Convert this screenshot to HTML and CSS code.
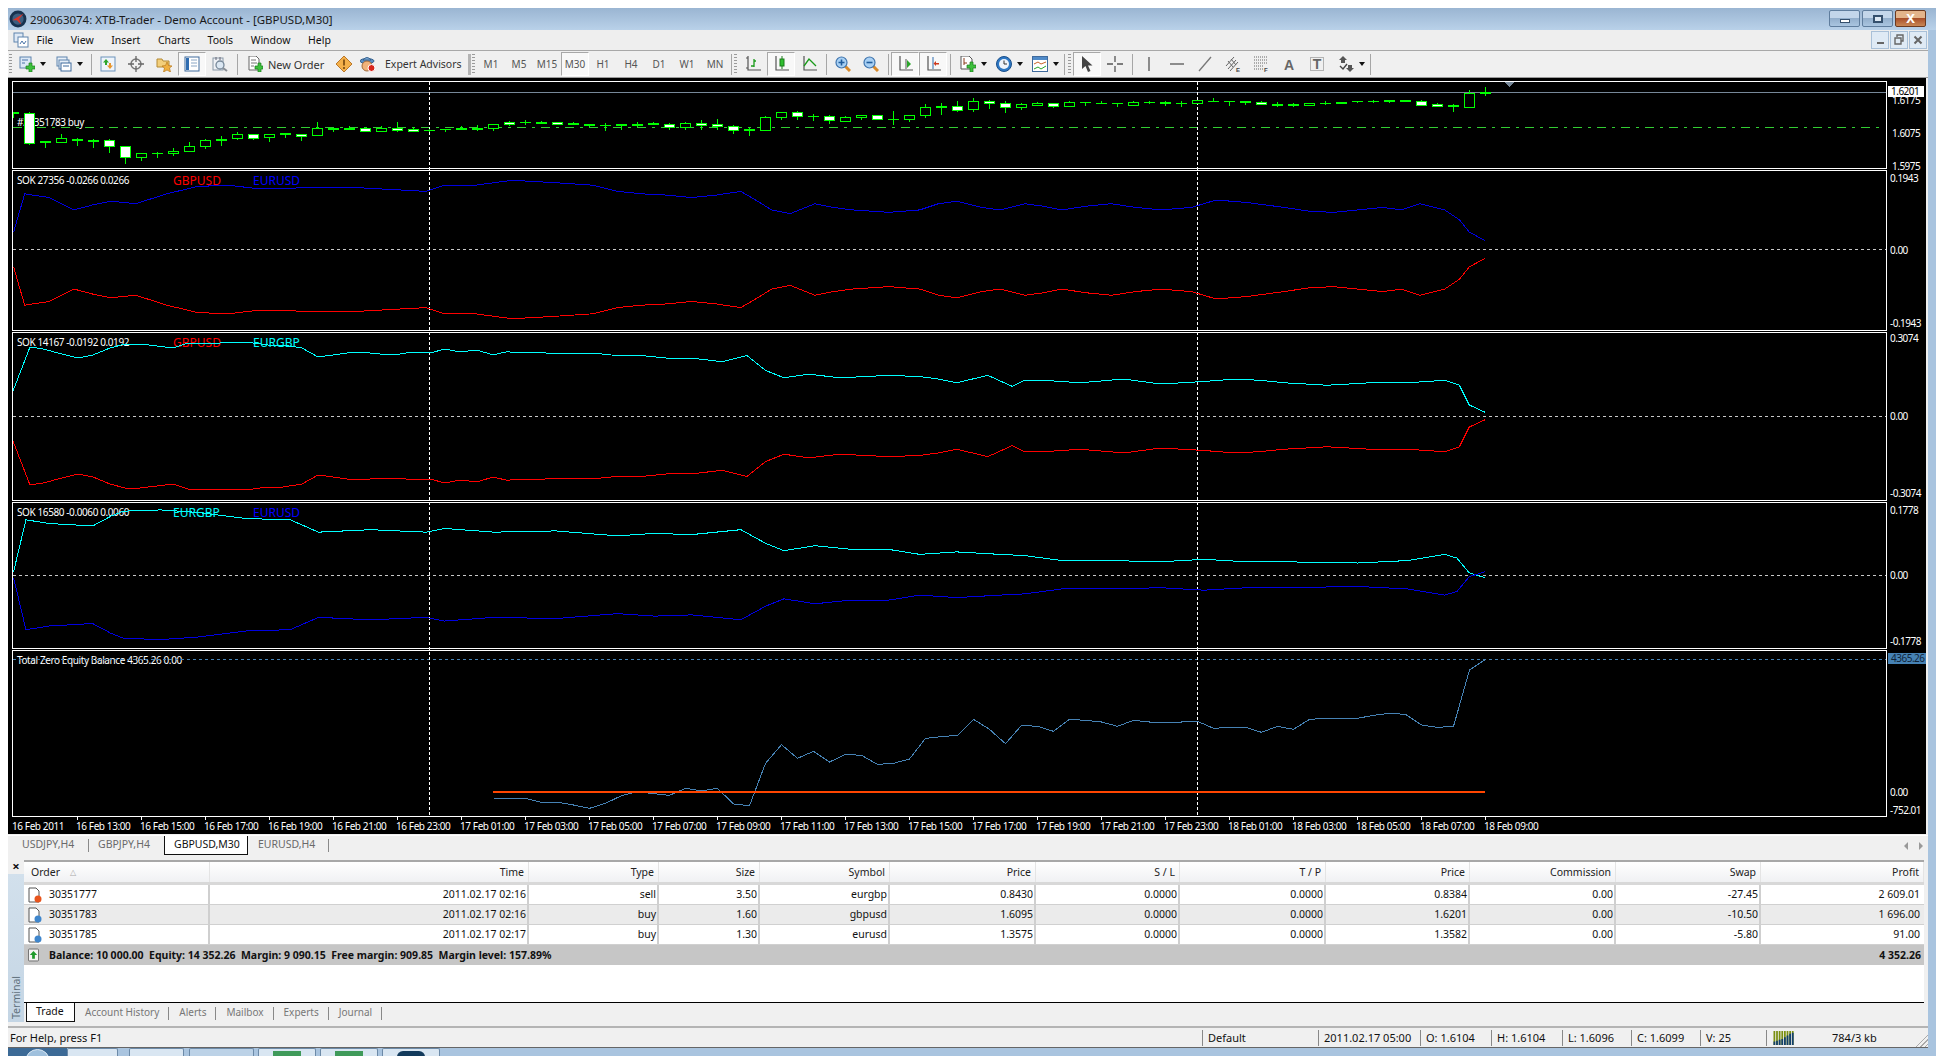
FILE: index.html
```html
<!DOCTYPE html>
<html lang="en">
<head>
    <meta charset="UTF-8">
    <title>290063074: XTB-Trader - Demo Account - [GBPUSD,M30]</title>
    <link rel="stylesheet" href="styles.css">
</head>
<body>
<div class="window">
    <header class="titlebar">
        <svg class="logo" viewBox="0 0 16 16"><circle cx="8" cy="8" r="7.5" fill="#17324f"/><circle cx="8" cy="8" r="5" fill="#3d5f80"/><path d="M3 9 L13 3 L9 8 L11 13 L7 9 Z" fill="#d8352a"/></svg>
        <span class="title-text">290063074: XTB-Trader - Demo Account - [GBPUSD,M30]</span>
        <div class="win-buttons">
            <button class="win-btn"><i class="glyph-min"></i></button>
            <button class="win-btn"><i class="glyph-max"></i></button>
            <button class="win-btn close"><b>X</b></button>
        </div>
    </header>

    <div class="client">
        <nav class="menubar">
            <svg class="ic doc-ic" viewBox="0 0 16 16"><rect x="1" y="1" width="9" height="9" fill="#dfe9f5" stroke="#5f84ad"/><rect x="5" y="5" width="10" height="10" fill="#fff" stroke="#5f84ad"/><path d="M7 12 L9 9 L11 12 L13 9" fill="none" stroke="#4a74a8"/></svg>
            <span class="menu-item">File</span>
            <span class="menu-item">View</span>
            <span class="menu-item">Insert</span>
            <span class="menu-item">Charts</span>
            <span class="menu-item">Tools</span>
            <span class="menu-item">Window</span>
            <span class="menu-item">Help</span>
            <div class="mdi-buttons">
                <button class="mdi-btn"><i class="mdi-min"></i></button>
                <button class="mdi-btn"><svg viewBox="0 0 12 12"><path d="M4 3V1H10V7H8M2 4H8V10H2Z" fill="none" stroke="#666" stroke-width="1.4"/></svg></button>
                <button class="mdi-btn"><svg viewBox="0 0 12 12"><path d="M2.5 2.5 L9.5 9.5 M9.5 2.5 L2.5 9.5" stroke="#666" stroke-width="2"/></svg></button>
            </div>
        </nav>

        <div class="toolbar">
            <i class="grip"></i>
            <button class="btn drop first">
                <svg class="ic" viewBox="0 0 16 16"><rect x="1" y="1" width="11" height="11" fill="#dbe8f6" stroke="#5f84ad"/><path d="M3 4H9M3 7H6" stroke="#4a74a8"/><path d="M7 10H10V7H13V10H16V13H13V16H10V13H7Z" fill="#3cc03c" stroke="#1b7d1b" stroke-width=".7"/></svg>
                <i class="caret"></i>
            </button>
            <button class="btn drop wide">
                <svg class="ic" viewBox="0 0 16 16"><rect x="1" y="1" width="10" height="9" fill="#e8f0f9" stroke="#5f84ad"/><rect x="3" y="4" width="10" height="9" fill="#e8f0f9" stroke="#5f84ad"/><rect x="5" y="7" width="10" height="8" fill="#fff" stroke="#3f6a9c"/><path d="M7 10H13" stroke="#3f6a9c"/></svg>
                <i class="caret"></i>
            </button>
            <i class="sep"></i>
            <button class="btn"><svg class="ic" viewBox="0 0 16 16"><rect x="1" y="1" width="14" height="14" fill="#eef4fb" stroke="#6d93bb"/><path d="M6 3L9 6.5H7V9H5V6.5H3Z" fill="#2da52d"/><path d="M10 13L7 9.5H9V7H11V9.5H13Z" fill="#e8962e"/></svg></button>
            <button class="btn"><svg class="ic" viewBox="0 0 16 16"><circle cx="8" cy="8" r="5" fill="none" stroke="#777" stroke-width="1.4"/><path d="M8 0V6M8 10V16M0 8H6M10 8H16" stroke="#666" stroke-width="1.3"/></svg></button>
            <button class="btn"><svg class="ic" viewBox="0 0 16 16"><path d="M1 3H6L7 5H13V11H1Z" fill="#f3cf7b" stroke="#b48a34"/><path d="M11 6L12.5 9.5L16 10L13.500 12L14.500 16L11 14L7.500 16L8.500 12L6 10L9.500 9.500Z" fill="#f0b040" stroke="#b97a1c" stroke-width=".7"/></svg></button>
            <button class="btn on"><svg class="ic" viewBox="0 0 16 16"><rect x="1" y="1" width="14" height="14" fill="#fff" stroke="#3f6a9c"/><rect x="2" y="2" width="3" height="12" fill="#2f6cb0"/><path d="M7 4H13M7 7H13M7 10H13" stroke="#8aa6c4"/></svg></button>
            <button class="btn"><svg class="ic" viewBox="0 0 16 16"><rect x="1" y="2" width="10" height="12" fill="#eef1f5" stroke="#8a99a8"/><path d="M4 1V4M8 1V4" stroke="#667"/><circle cx="8" cy="9" r="4" fill="#dbe7f2" stroke="#778899" stroke-width="1.3"/><path d="M11 12L15 15" stroke="#8a8f96" stroke-width="2"/></svg></button>
            <i class="sep"></i>
            <button class="btn labelled">
                <svg class="ic" viewBox="0 0 16 16"><path d="M2 0H9L12 3V14H2Z" fill="#fff" stroke="#666"/><path d="M4 4H9M4 7H10M4 10H7" stroke="#777"/><path d="M8 10H11V7H14V10H16V13H14V16H11V13H8Z" fill="#3cc03c" stroke="#1b7d1b" stroke-width=".7"/></svg>
                <span>New Order</span>
            </button>
            <button class="btn"><svg class="ic" viewBox="0 0 16 16"><path d="M8 0L16 8L8 16L0 8Z" fill="#f4b04a" stroke="#b9772a"/><path d="M8 3.500V9.500M8 11V13" stroke="#7a4a12" stroke-width="1.700"/></svg></button>
            <button class="btn labelled ea">
                <svg class="ic" viewBox="0 0 16 16"><ellipse cx="7" cy="5" rx="7" ry="2.500" fill="#5c8fc4" stroke="#34618f"/><path d="M3 4Q7 -1 11 4Z" fill="#7eabd8" stroke="#34618f"/><circle cx="7" cy="10" r="5" fill="#f0b27a" stroke="#a06a3a"/><circle cx="11.500" cy="12" r="3.500" fill="#d8261c" stroke="#fff"/></svg>
                <span>Expert Advisors</span>
            </button>
            <i class="sep thick"></i>
            <i class="grip"></i>
            <button class="btn tf">M1</button>
            <button class="btn tf">M5</button>
            <button class="btn tf">M15</button>
            <button class="btn tf on">M30</button>
            <button class="btn tf">H1</button>
            <button class="btn tf">H4</button>
            <button class="btn tf">D1</button>
            <button class="btn tf">W1</button>
            <button class="btn tf">MN</button>
            <i class="sep tight"></i>
            <i class="grip"></i>
            <button class="btn"><svg class="ic" viewBox="0 0 16 16"><path d="M3 0V14H16M1 2H3M1 12H3" fill="none" stroke="#555" stroke-width="1.200"/><path d="M9 3V11M9 10H6M9 5H11" stroke="#1a9a1a" stroke-width="1.300" fill="none"/></svg></button>
            <button class="btn on"><svg class="ic" viewBox="0 0 16 16"><path d="M3 0V14H16" fill="none" stroke="#555" stroke-width="1.200"/><path d="M9 0V13" stroke="#1a7a1a"/><rect x="7" y="3" width="4" height="7" fill="#2fbf2f" stroke="#1a7a1a"/></svg></button>
            <button class="btn"><svg class="ic" viewBox="0 0 16 16"><path d="M3 0V14H16" fill="none" stroke="#555" stroke-width="1.200"/><path d="M3 10L8 3L11 6L15 10" fill="none" stroke="#1a9a1a" stroke-width="1.300"/></svg></button>
            <i class="sep"></i>
            <button class="btn"><svg class="ic" viewBox="0 0 16 16"><path d="M10 10L15 15" stroke="#d98a2b" stroke-width="3"/><circle cx="6.500" cy="6.500" r="5.500" fill="#a8d0f4" stroke="#3f74ad" stroke-width="1.200"/><path d="M3.500 6.500H9.500M6.500 3.500V9.500" stroke="#1f5c9c" stroke-width="1.600"/></svg></button>
            <button class="btn"><svg class="ic" viewBox="0 0 16 16"><path d="M10 10L15 15" stroke="#d98a2b" stroke-width="3"/><circle cx="6.500" cy="6.500" r="5.500" fill="#a8d0f4" stroke="#3f74ad" stroke-width="1.200"/><path d="M3.500 6.500H9.500" stroke="#1f5c9c" stroke-width="1.600"/></svg></button>
            <i class="sep"></i>
            <button class="btn on"><svg class="ic" viewBox="0 0 16 16"><path d="M3 0V14H16" fill="none" stroke="#555" stroke-width="1.200"/><path d="M9 3V13" stroke="#555"/><path d="M10 4L14 8L10 12Z" fill="#2aa52a"/></svg></button>
            <button class="btn on"><svg class="ic" viewBox="0 0 16 16"><path d="M3 0V14H16" fill="none" stroke="#555" stroke-width="1.200"/><path d="M8 1V13" stroke="#2f6cb0"/><path d="M14 7H11V5L8.500 7.500L11 10V8.500H14Z" fill="#cf3a1e"/></svg></button>
            <i class="sep"></i>
            <button class="btn drop">
                <svg class="ic" viewBox="0 0 16 16"><path d="M1 0H9L12 3V13H1Z" fill="#fff" stroke="#555"/><path d="M4 2V9M4 7H7" stroke="#8a3a1a"/><path d="M7 9H10V6H13V9H16V12H13V16H10V12H7Z" fill="#3cc03c" stroke="#1b7d1b" stroke-width=".7"/></svg>
                <i class="caret"></i>
            </button>
            <button class="btn drop">
                <svg class="ic" viewBox="0 0 16 16"><circle cx="8" cy="8" r="7.500" fill="#2e78c4" stroke="#1a4f8a"/><circle cx="8" cy="8" r="5" fill="#eef4fb"/><path d="M8 4.500V8H11" fill="none" stroke="#333"/></svg>
                <i class="caret"></i>
            </button>
            <button class="btn drop">
                <svg class="ic" viewBox="0 0 16 16"><rect x="0.500" y="0.500" width="15" height="15" fill="#fff" stroke="#3f6a9c"/><rect x="1" y="1" width="14" height="3" fill="#4f8ac8"/><path d="M2 8L6 6L9 8L14 6" fill="none" stroke="#c8642a"/><path d="M2 13L6 11L9 13L14 10" fill="none" stroke="#2aa52a"/></svg>
                <i class="caret"></i>
            </button>
            <i class="sep"></i>
            <i class="grip"></i>
            <button class="btn on"><svg class="ic" viewBox="0 0 16 16"><path d="M3 0V13L6.500 10L9 16L11.500 15L9 9.500H13.500Z" fill="#444"/></svg></button>
            <button class="btn"><svg class="ic" viewBox="0 0 16 16"><path d="M8 0V6M8 10V16M0 8H6M10 8H16" stroke="#555" stroke-width="1.300"/></svg></button>
            <i class="sep"></i>
            <button class="btn"><svg class="ic" viewBox="0 0 16 16"><path d="M8 1V15" stroke="#555" stroke-width="1.300"/></svg></button>
            <button class="btn"><svg class="ic" viewBox="0 0 16 16"><path d="M1 8H15" stroke="#555" stroke-width="1.300"/></svg></button>
            <button class="btn"><svg class="ic" viewBox="0 0 16 16"><path d="M2 15L14 1" stroke="#777" stroke-width="1.300"/></svg></button>
            <button class="btn"><svg class="ic" viewBox="0 0 16 16"><path d="M1 10L9 1M3 13L11 4M5 15L13 6M3 5L8 11M6 3L11 9" stroke="#666" fill="none"/><text x="11" y="16" class="ic-letter">E</text></svg></button>
            <button class="btn"><svg class="ic" viewBox="0 0 16 16"><path d="M1 1H14M1 4H14M1 7H14M1 10H10M1 13H10" stroke="#666" stroke-dasharray="1 1"/><text x="11" y="16" class="ic-letter">F</text></svg></button>
            <button class="btn"><svg class="ic" viewBox="0 0 16 16"><text x="8" y="14" class="ic-big">A</text></svg></button>
            <button class="btn"><svg class="ic" viewBox="0 0 16 16"><rect x="1.500" y="1.500" width="13" height="13" fill="none" stroke="#777" stroke-dasharray="1 1"/><text x="8" y="13" class="ic-big">T</text></svg></button>
            <button class="btn drop">
                <svg class="ic" viewBox="0 0 16 16"><path d="M5 0L9 4H7V7H3V4H1Z" fill="#555"/><path d="M12 16L8 12H10V9H14V12H16Z" fill="#555"/><path d="M2 10L5 13L9 8" fill="none" stroke="#444" stroke-width="1.400"/></svg>
                <i class="caret"></i>
            </button>
            <i class="sep"></i>
        </div>

        <main class="chart">
            <section class="pane pane-1">
                <div class="plot"><span class="order-label">#30351783 buy</span></div>
                <div class="axis">
                    <span class="tick" style="top:13px">1.6175</span>
                    <span class="tick" style="top:46px">1.6075</span>
                    <span class="tick" style="top:79px">1.5975</span>
                    <span class="tick current" style="top:5px">1.6201</span>
                </div>
            </section>
            <section class="pane pane-2">
                <div class="plot">
                    <span class="ind-name">SOK 27356 -0.0266 0.0266</span>
                    <span class="sym first red">GBPUSD</span><span class="sym second blue">EURUSD</span>
                </div>
                <div class="axis">
                    <span class="tick" style="top:2px">0.1943</span>
                    <span class="tick" style="top:74px">0.00</span>
                    <span class="tick" style="top:147px">-0.1943</span>
                </div>
            </section>
            <section class="pane pane-3">
                <div class="plot">
                    <span class="ind-name">SOK 14167 -0.0192 0.0192</span>
                    <span class="sym first red">GBPUSD</span><span class="sym second cyan">EURGBP</span>
                </div>
                <div class="axis">
                    <span class="tick" style="top:0">0.3074</span>
                    <span class="tick" style="top:78px">0.00</span>
                    <span class="tick" style="top:155px">-0.3074</span>
                </div>
            </section>
            <section class="pane pane-4">
                <div class="plot">
                    <span class="ind-name">SOK 16580 -0.0060 0.0060</span>
                    <span class="sym first cyan">EURGBP</span><span class="sym second blue">EURUSD</span>
                </div>
                <div class="axis">
                    <span class="tick" style="top:2px">0.1778</span>
                    <span class="tick" style="top:67px">0.00</span>
                    <span class="tick" style="top:133px">-0.1778</span>
                </div>
            </section>
            <section class="pane pane-5">
                <div class="plot">
                    <span class="ind-name">Total Zero Equity Balance 4365.26 0.00</span>
                </div>
                <div class="axis">
                    <span class="tick balance" style="top:3px">4365.26</span>
                    <span class="tick" style="top:136px">0.00</span>
                    <span class="tick" style="top:154px">-752.01</span>
                </div>
            </section>
            <div class="time-axis">
                <span>16 Feb 2011</span><span>16 Feb 13:00</span><span>16 Feb 15:00</span><span>16 Feb 17:00</span><span>16 Feb 19:00</span><span>16 Feb 21:00</span><span>16 Feb 23:00</span>
                <span>17 Feb 01:00</span><span>17 Feb 03:00</span><span>17 Feb 05:00</span><span>17 Feb 07:00</span><span>17 Feb 09:00</span><span>17 Feb 11:00</span><span>17 Feb 13:00</span><span>17 Feb 15:00</span><span>17 Feb 17:00</span><span>17 Feb 19:00</span><span>17 Feb 21:00</span><span>17 Feb 23:00</span>
                <span>18 Feb 01:00</span><span>18 Feb 03:00</span><span>18 Feb 05:00</span><span>18 Feb 07:00</span><span>18 Feb 09:00</span>
            </div>
            <svg id="overlay" viewBox="8 78 1918 756"></svg>
        </main>

        <div class="chart-tabs">
            <span class="ctab">USDJPY,H4</span>
            <span class="ctab">GBPJPY,H4</span>
            <span class="ctab active">GBPUSD,M30</span>
            <span class="ctab">EURUSD,H4</span>
            <div class="tab-arrows"><i class="arrow-l"></i><i class="arrow-r"></i></div>
        </div>

        <section class="terminal">
            <aside class="term-side">
                <b class="term-close">×</b>
                <div class="term-strip"><span>Terminal</span></div>
            </aside>
            <div class="term-main">
                <div class="row head">
                    <div>Order<i class="sort">△</i></div><div>Time</div><div>Type</div><div>Size</div><div>Symbol</div><div>Price</div><div>S / L</div><div>T / P</div><div>Price</div><div>Commission</div><div>Swap</div><div>Profit</div>
                </div>
                <div class="row">
                    <div><svg class="doc" viewBox="0 0 14 16"><path d="M1 1H8L11 4V15H1Z" fill="#fff" stroke="#555"/><circle cx="10" cy="12" r="3.500" fill="#e8541c"/></svg>30351777</div><div>2011.02.17 02:16</div><div>sell</div><div>3.50</div><div>eurgbp</div><div>0.8430</div><div>0.0000</div><div>0.0000</div><div>0.8384</div><div>0.00</div><div>-27.45</div><div>2 609.01</div>
                </div>
                <div class="row alt">
                    <div><svg class="doc" viewBox="0 0 14 16"><path d="M1 1H8L11 4V15H1Z" fill="#fff" stroke="#555"/><circle cx="10" cy="12" r="3.500" fill="#3f86cc"/></svg>30351783</div><div>2011.02.17 02:16</div><div>buy</div><div>1.60</div><div>gbpusd</div><div>1.6095</div><div>0.0000</div><div>0.0000</div><div>1.6201</div><div>0.00</div><div>-10.50</div><div>1 696.00</div>
                </div>
                <div class="row">
                    <div><svg class="doc" viewBox="0 0 14 16"><path d="M1 1H8L11 4V15H1Z" fill="#fff" stroke="#555"/><circle cx="10" cy="12" r="3.500" fill="#3f86cc"/></svg>30351785</div><div>2011.02.17 02:17</div><div>buy</div><div>1.30</div><div>eurusd</div><div>1.3575</div><div>0.0000</div><div>0.0000</div><div>1.3582</div><div>0.00</div><div>-5.80</div><div>91.00</div>
                </div>
                <div class="summary">
                    <svg class="up" viewBox="0 0 12 14"><rect x=".5" y=".5" width="11" height="13" rx="1" fill="#f4f4f4" stroke="#666"/><path d="M6 2.500L10 7H7.500V11H4.500V7H2Z" fill="#1f9a2c"/></svg>
                    <span>Balance: 10 000.00&nbsp; Equity: 14 352.26&nbsp; Margin: 9 090.15&nbsp; Free margin: 909.85&nbsp; Margin level: 157.89%</span>
                    <span class="total">4 352.26</span>
                </div>
                <div class="blank"></div>
                <div class="term-tabs">
                    <span class="ttab active">Trade</span>
                    <span class="ttab">Account History</span>
                    <span class="ttab">Alerts</span>
                    <span class="ttab">Mailbox</span>
                    <span class="ttab">Experts</span>
                    <span class="ttab">Journal</span>
                </div>
            </div>
        </section>

        <footer class="statusbar">
            <span class="st help">For Help, press F1</span>
            <span class="st profile">Default</span>
            <span class="st date">2011.02.17 05:00</span>
            <span class="st ohlc">O: 1.6104</span>
            <span class="st ohlc">H: 1.6104</span>
            <span class="st ohlc">L: 1.6096</span>
            <span class="st ohlc">C: 1.6099</span>
            <span class="st ohlc">V: 25</span>
            <span class="st conn">
                <svg class="bars" viewBox="0 0 24 16"><path d="M1 0V16M4 0V16M7 0V16M10 0V16M13 0V16M16 0V16M19 0V16M22 0V16" stroke="#7a8f10" stroke-width="2"/><path d="M1 12V16M4 11V16M7 10V16M10 9V16M13 7V16M16 5V16M19 3V16M22 2V16" stroke="#123f6e" stroke-width="2"/></svg>
                <span class="kb">784/3 kb</span>
            </span>
            <i class="size-grip"></i>
        </footer>
    </div>

    <div class="taskbar">
        <span class="start"><i></i></span>
        <span class="task t1"></span>
        <span class="task t2"></span>
        <span class="task t3"></span>
        <span class="task t4"><i class="green"></i></span>
        <span class="task t4"><i class="green"></i></span>
        <span class="task t4"><i class="navy"></i></span>
    </div>
</div>
<script src="script.js"></script>
</body>
</html>
```

FILE: styles.css
```css
* {
    box-sizing: border-box;
}

html, body {
    margin: 0;
    height: 1056px;
    overflow: hidden;
    background: #fff;
    font-family: "Noto Sans", sans-serif;
    font-size: 10.5px;
    color: #111;
}

button {
    font: inherit;
    padding: 0;
    border: none;
    background: none;
    color: inherit;
}

.window {
    margin: 8px 0 0 8px;
    height: 1048px;
    background: #a9c4df;
}

/* title bar */
.titlebar {
    height: 22px;
    display: flex;
    align-items: center;
    padding: 0 10px 0 1px;
    background: linear-gradient(#9ab5d2, #b9d1e9);
}

.logo {
    width: 18px;
    height: 18px;
}

.title-text {
    margin-left: 3px;
    font-size: 11.5px;
    color: #1a1a1a;
}

.win-buttons {
    margin-left: auto;
    display: flex;
    gap: 2px;
    height: 17px;
    align-self: flex-start;
    margin-top: 2px;
}

.win-btn {
    width: 31px;
    border: 1px solid #5f7d9d;
    border-radius: 2px;
    background: linear-gradient(#c3d6ea 45%, #93afcc 50%, #aac5e0);
    display: flex;
    align-items: center;
    justify-content: center;
}

.glyph-min {
    width: 10px;
    height: 4px;
    margin-top: 4px;
    border: 1px solid #35506d;
    background: #fff;
}

.glyph-max {
    width: 10px;
    height: 8px;
    border: 2px solid #35506d;
    background: #dde8f3;
}

.win-btn.close {
    border-color: #6b3a20;
    background: linear-gradient(#e3b48b 45%, #a9502a 50%, #c98755);
    color: #fff;
    font-size: 13px;
    line-height: 1;
}

/* client area */
.client {
    width: 1920px;
    background: #f0f0f0;
}

.ic {
    display: block;
    width: 16px;
    height: 16px;
    flex: none;
}

.ic-letter {
    font: bold 6px "Liberation Sans", sans-serif;
    fill: #444;
}

.ic-big {
    font: bold 14px "Liberation Sans", sans-serif;
    fill: #666;
    text-anchor: middle;
}

.menubar {
    height: 21px;
    display: flex;
    align-items: center;
    padding-left: 5px;
    border-bottom: 1px solid #a8a8a8;
    background: #eee;
    font-size: 10.5px;
}

.doc-ic {
    margin-right: -1px;
}

.menu-item {
    padding: 0 9px 0 8.5px;
}

.mdi-buttons {
    margin-left: auto;
    margin-right: 1px;
    display: flex;
    gap: 1px;
}

.mdi-btn {
    width: 18px;
    height: 18px;
    display: flex;
    align-items: center;
    justify-content: center;
    border: 1px solid #a9c0d8;
    background: #dfeaf5;
}

.mdi-btn svg {
    width: 12px;
    height: 12px;
}

.mdi-min {
    width: 7px;
    height: 2px;
    margin-top: 6px;
    background: #666;
}

.toolbar {
    height: 27px;
    display: flex;
    align-items: center;
    background: #f0f0f0;
    border-bottom: 1px solid #9a9a9a;
}

.grip {
    width: 3px;
    height: 20px;
    margin: 0 2px 0 1px;
    flex: none;
    background: repeating-linear-gradient(#9a9a9a 0 1px, transparent 1px 3px);
}

.sep {
    width: 1px;
    height: 21px;
    margin: 0 2px 0 3px;
    flex: none;
    background: #a6a6a6;
}

.sep.tight {
    margin-left: 2px;
    margin-right: 1px;
}

.sep.thick {
    width: 3px;
    background: #b4b4b4;
    margin-right: 0;
}

.btn {
    width: 28px;
    height: 24px;
    flex: none;
    display: flex;
    align-items: center;
    justify-content: center;
    font-size: 11px;
    color: #333;
}

.btn.drop {
    width: 36px;
    justify-content: flex-start;
    padding-left: 7px;
}

.btn.drop.wide {
    width: 38px;
    padding-left: 6px;
}

.btn.drop.first {
    padding-left: 5px;
}

.caret {
    margin-left: 5px;
    border: 3px solid transparent;
    border-top: 4px solid #111;
    border-bottom: 0;
}

.btn.labelled {
    width: 90px;
    padding-left: 7px;
    justify-content: flex-start;
}

.btn.labelled span {
    margin-left: 5px;
    white-space: nowrap;
}

.btn.ea {
    width: 107px;
    padding-left: 2px;
}

.btn.ea span {
    margin-left: 9px;
    font-size: 10.5px;
}

.btn.tf {
    color: #555;
    font-size: 10px;
}

.btn.on {
    background: #f8f8f8;
    border: 1px solid;
    border-color: #a8a8a8 #fff #fff #a8a8a8;
}

/* chart */
.chart {
    position: relative;
    height: 756px;
    width: 1918px;
    padding: 3px 0 0 4px;
    background: #000;
    color: #fff;
}

.pane {
    display: flex;
    margin-bottom: 1px;
}

.pane-1 { height: 88px; }
.pane-2 { height: 161px; }
.pane-3 { height: 169px; }
.pane-4 { height: 147px; }
.pane-5 { height: 167px; margin-bottom: 0; }

.plot {
    position: relative;
    width: 1875px;
    flex: none;
    border: 1px solid #fff;
}

.axis {
    position: relative;
    flex: 1;
    font-size: 10px;
    line-height: 12px;
    letter-spacing: -.5px;
}

.tick {
    position: absolute;
    left: 3px;
    white-space: nowrap;
}

.pane-1 .tick {
    left: 5px;
}

.pane-1 .tick.current, .tick.current {
    left: 1px;
    width: 36px;
    height: 11px;
    padding-left: 3px;
    line-height: 11px;
    background: #fff;
    color: #000;
}

.tick.balance {
    left: 1px;
    width: 38px;
    height: 11px;
    padding-left: 3px;
    overflow: hidden;
    line-height: 11px;
    background: #4682b4;
    color: #10243a;
}

.order-label, .ind-name {
    position: absolute;
    left: 4px;
    line-height: 12px;
    white-space: nowrap;
    font-size: 10px;
    letter-spacing: -.4px;
}

.order-label {
    top: 34px;
}

.ind-name {
    top: 3px;
}

.sym {
    position: absolute;
    top: 2px;
    line-height: 15px;
    font-size: 12px;
}

.sym.first { left: 160px; }
.sym.second { left: 240px; }
.red { color: #f00; }
.blue { color: #00f; }
.cyan { color: #0ff; }

.time-axis {
    display: flex;
    height: 18px;
    font-size: 10px;
    line-height: 18px;
    letter-spacing: -.4px;
}

.time-axis span {
    position: relative;
    width: 64px;
    flex: none;
    white-space: nowrap;
}

.time-axis span + span::before {
    content: "";
    position: absolute;
    left: 1px;
    top: 0;
    width: 1px;
    height: 3px;
    background: #fff;
}

#overlay {
    position: absolute;
    left: 0;
    top: 0;
    width: 1918px;
    height: 756px;
    pointer-events: none;
    shape-rendering: crispEdges;
}

/* chart tabs */
.chart-tabs {
    height: 21px;
    display: flex;
    align-items: flex-start;
    margin-top: 1px;
    border-top: 1px solid #fff;
    background: #f0f0f0;
    color: #6a6a6a;
    font-size: 10.5px;
}

.ctab {
    flex: none;
    padding: 1px 0 0 9px;
    height: 19px;
    line-height: 15px;
    position: relative;
    white-space: nowrap;
}

.ctab:nth-child(1) { width: 76px; margin-left: 5px; }
.ctab:nth-child(2) { width: 75px; }
.ctab:nth-child(3) { width: 84px; }
.ctab:nth-child(4) { width: 81px; padding-left: 10px; }

.ctab:not(.active)::after {
    content: "";
    position: absolute;
    right: 0;
    top: 3px;
    height: 13px;
    width: 1px;
    background: #8a8a8a;
}

.ctab:nth-child(2)::after {
    display: none;
}

.ctab.active {
    background: #fff;
    color: #111;
    border: 1px solid #111;
    border-top: 0;
}

.tab-arrows {
    margin-left: auto;
    margin-right: 5px;
    margin-top: 6px;
    display: flex;
    gap: 11px;
}

.arrow-l {
    border: 4px solid transparent;
    border-right: 4px solid #999;
    border-left: 0;
}

.arrow-r {
    border: 4px solid transparent;
    border-left: 4px solid #999;
    border-right: 0;
}

/* terminal */
.terminal {
    display: flex;
    height: 166px;
    margin-top: 4px;
}

.term-side {
    width: 16px;
    display: flex;
    flex-direction: column;
}

.term-close {
    height: 14px;
    text-align: center;
    font-size: 13px;
    line-height: 12px;
}

.term-strip {
    flex: 1;
    margin-bottom: 4px;
    display: flex;
    align-items: flex-end;
    justify-content: center;
    padding-bottom: 3px;
    background: linear-gradient(#d2e0ec, #c4d5e4);
    color: #60707c;
    font-size: 10.5px;
}

.term-strip span {
    writing-mode: vertical-rl;
    transform: rotate(180deg);
}

.term-main {
    width: 1900px;
    display: flex;
    flex-direction: column;
}

.row {
    display: grid;
    grid-template-columns: 186px 319px 130px 101px 130px 146px 144px 146px 144px 146px 145px 163px;
    height: 20px;
    background: #fff;
    line-height: 19px;
    text-align: right;
    border-bottom: 1px solid #d0d0d0;
}

.row.alt {
    background: #ebebeb;
}

.row > div {
    padding-right: 1px;
    border-right: 2px solid #cfcfcf;
    white-space: nowrap;
}

.row > div:first-child {
    display: flex;
    align-items: center;
    padding-left: 4px;
    text-align: left;
}

.row > div:last-child {
    border-right: 0;
    padding-right: 4px;
}

.row.head {
    height: 25px;
    border-top: 2px solid #a8a8a8;
    border-bottom: 3px solid #d8d8d8;
    background: linear-gradient(#fff, #f0f1f3);
    line-height: 20px;
    color: #222;
}

.row.head > div {
    padding-right: 4px;
    border-right: 1px solid #e4e4e4;
}

.row.head > div:first-child {
    padding-left: 7px;
}

.sort {
    margin-left: 10px;
    font-style: normal;
    font-size: 8px;
    color: #aaa;
}

.doc {
    width: 14px;
    height: 16px;
    margin-right: 7px;
    flex: none;
}

.summary {
    height: 20px;
    flex: none;
    display: flex;
    align-items: center;
    padding: 0 3px 1px 4px;
    background: #c6c6c6;
    font-weight: 700;
    white-space: nowrap;
}

.up {
    width: 11px;
    height: 14px;
    margin-right: 10px;
    flex: none;
}

.total {
    margin-left: auto;
}

.blank {
    height: 38px;
    flex: none;
    background: #fff;
    border-bottom: 1px solid #000;
}

.term-tabs {
    flex: 1;
    display: flex;
    align-items: flex-start;
    color: #777;
    font-size: 10px;
}

.ttab {
    position: relative;
    height: 20px;
    padding: 2px 10px 0 10px;
    line-height: 14px;
    white-space: nowrap;
}

.ttab:not(.active)::after {
    content: "";
    position: absolute;
    right: 0;
    top: 4px;
    height: 13px;
    width: 1px;
    background: #888;
}

.ttab.active {
    width: 49px;
    margin: 0 0 0 2px;
    padding: 1px 0 0 9px;
    height: 19px;
    background: #fff;
    color: #111;
    border: 1px solid #111;
    border-top: 0;
    font-size: 10.5px;
}

/* status bar */
.statusbar {
    display: flex;
    height: 22px;
    position: relative;
    border-top: 2px solid #b4b4b4;
    background: #f0f0f0;
    align-items: center;
    font-size: 11px;
    border-bottom: 1px solid #666;
}

.st {
    height: 16px;
    line-height: 16px;
    padding-left: 5px;
    border-left: 1px solid #888;
    white-space: nowrap;
}

.st.help {
    width: 1194px;
    padding-left: 2px;
    border-left: 0;
}

.st.profile { width: 116px; }
.st.date { width: 102px; }
.st.ohlc { width: 71px; }
.st.ohlc:nth-of-type(6) { width: 69px; }
.st.ohlc:nth-of-type(7) { width: 69px; }
.st.ohlc:nth-of-type(8) { width: 66px; }

.st.conn {
    flex: 1;
    display: flex;
    align-items: center;
}

.bars {
    width: 24px;
    height: 14px;
}

.kb {
    margin-left: 36px;
}

.size-grip {
    position: absolute;
    right: 0;
    bottom: 0;
    width: 14px;
    height: 14px;
    background: repeating-linear-gradient(135deg, transparent 0 2px, #aaa 2px 3px);
    clip-path: polygon(100% 0, 100% 100%, 0 100%);
}

/* taskbar strip */
.taskbar {
    display: flex;
    height: 8px;
    width: 1920px;
    overflow: hidden;
    background: #a9c4df;
}

.start {
    width: 59px;
    background: #3c6a96;
    display: flex;
    justify-content: center;
}

.start i {
    width: 25px;
    height: 25px;
    margin-top: 1px;
    border-radius: 50%;
    background: #9fc0dd;
    border: 1px solid #dbe9f5;
}

.task {
    height: 8px;
    border: 1px solid #6c8aa8;
    border-bottom: 0;
    border-radius: 2px 2px 0 0;
    background: #d9e6f2;
    display: flex;
    justify-content: center;
}

.t1 { width: 51px; margin-right: 11px; }
.t2 { width: 55px; margin-right: 5px; }
.t3 { width: 65px; background: #bcd2e7; }
.t4 { width: 58px; margin-left: 4px; }

.task i {
    width: 28px;
    height: 6px;
    margin-top: 2px;
}

.task .green { background: #3f9a5a; }
.task .navy { background: #123a5c; border-radius: 14px 14px 0 0; }
```

FILE: script.js
```js
const overlay = document.getElementById('overlay');
const NS = 'http://www.w3.org/2000/svg';
const GREEN = '#00ff00';

function add(tag, attrs, parent = overlay) {
    const el = document.createElementNS(NS, tag);
    for (const k in attrs) el.setAttribute(k, attrs[k]);
    parent.appendChild(el);
    return el;
}

function hline(y, x1, x2, color, dash, width = 1) {
    add('line', { x1, x2, y1: y + 0.5, y2: y + 0.5, stroke: color, 'stroke-dasharray': dash || 'none', 'stroke-width': width });
}

function polyline(pts, color) {
    add('polyline', { points: pts.map(p => p.join(',')).join(' '), fill: 'none', stroke: color });
}

// clip so nothing spills over the left border of the plots
const clip = add('clipPath', { id: 'plots' }, add('defs', {}));
add('rect', { x: 13, y: 82, width: 1873, height: 733 }, clip);

// price lines of the top pane
hline(92, 13, 1886, '#778899');
hline(127, 13, 1880, '#32cd32', '9 6 3 6');
add('path', { d: 'M1504 82H1514L1509 87Z', fill: '#778899' });

// zero levels
hline(249, 13, 1886, '#c8c8c8', '3 3');
hline(416, 13, 1886, '#c8c8c8', '3 3');
hline(575, 13, 1886, '#c8c8c8', '3 3');
hline(659, 13, 1886, '#4682b4', '3 3');

// period separators
for (const x of [429, 1197]) {
    add('line', { x1: x + 0.5, x2: x + 0.5, y1: 82, y2: 816, stroke: '#fff', 'stroke-dasharray': '3 2' });
}

// candles: kind (w white, b black, t solid, d doji), body top, body bottom, high, low
// values are in thirds of a pixel, measured from y=80
const candles = [
    ['t',97,100,95,112],['w',100,190,97,193],['t',184,187,184,200],['b',175,185,163,185],['t',178,181,174,194],
    ['t',181,184,178,200],['w',181,199,178,215],['w',199,232,199,250],['b',220,232,220,240],['d',220,220,217,230],
    ['b',214,220,205,224],['b',199,214,187,214],['b',181,199,178,203],['t',178,181,169,194],['b',163,175,157,178],
    ['w',163,175,163,178],['b',163,172,163,182],['t',160,163,160,170],['w',163,169,163,180],['b',145,166,127,166],
    ['t',145,146,145,152],['t',145,146,139,148],['w',145,154,142,154],['b',145,154,139,154],['w',145,151,127,154],
    ['w',148,154,142,154],['d',151,151,148,154],['d',148,148,148,154],['t',145,148,139,148],['t',144,146,136,149],
    ['b',133,145,133,151],['w',127,133,124,136],['d',127,127,120,133],['t',127,130,124,130],['w',127,133,127,133],
    ['t',130,133,127,133],['t',133,136,133,139],['d',136,136,129,150],['t',133,136,133,147],['t',133,136,127,139],
    ['t',130,133,127,133],['w',133,142,130,146],['b',130,142,127,146],['w',130,136,121,146],['w',133,139,118,146],
    ['w',139,151,136,158],['t',148,151,142,164],['b',112,151,109,151],['b',97,112,97,117],['w',97,109,94,116],
    ['d',109,109,103,120],['w',109,121,106,128],['b',112,124,109,124],['b',106,112,106,116],['w',106,118,105,118],
    ['d',118,118,94,131],['b',106,118,106,122],['b',82,106,73,110],['t',79,82,70,101],['w',79,91,64,92],
    ['b',64,88,55,92],['w',64,70,61,83],['w',70,82,64,95],['b',73,82,70,88],['b',70,76,67,76],
    ['w',70,79,70,82],['b',67,79,64,79],['d',67,67,67,74],['d',70,70,64,70],['d',70,70,70,77],
    ['b',67,74,64,74],['d',67,67,64,70],['t',67,70,64,74],['d',70,70,64,77],['b',61,70,61,70],
    ['d',64,64,55,64],['d',64,64,64,74],['t',64,67,64,71],['w',67,73,64,73],['t',73,76,67,79],
    ['t',73,76,70,79],['b',70,76,70,76],['d',70,70,64,73],['t',67,70,67,70],['d',64,64,64,67],
    ['d',64,64,61,67],['t',61,64,61,67],['t',61,64,61,64],['w',64,76,61,76],['w',73,79,70,79],
    ['t',76,79,73,92],['b',40,82,31,82],['t',37,40,22,44]
];
const toY = v => Math.round(80 + v / 3);
const group = add('g', { 'clip-path': 'url(#plots)' });
candles.forEach(([kind, top, bot, hi, lo], i) => {
    const x = 13 + 16 * i;
    const y1 = toY(top), y2 = toY(bot);
    add('rect', { x, y: toY(hi), width: 1, height: toY(lo) - toY(hi) + 1, fill: GREEN }, group);
    if (kind === 'd') {
        add('rect', { x: x - 5, y: y1, width: 11, height: 1, fill: GREEN }, group);
    } else if (kind === 't') {
        add('rect', { x: x - 5, y: y1, width: 11, height: y2 - y1 + 1, fill: GREEN }, group);
    } else {
        add('rect', { x: x - 5, y: y1, width: 10, height: y2 - y1, fill: kind === 'w' ? '#fff' : '#000', stroke: GREEN, transform: 'translate(.5 .5)' }, group);
    }
});

// indicator lines, x and y read in the 1568px wide picture
const SCALE = 1936 / 1568;
const scaled = pts => pts.map(([x, y]) => [x * SCALE, y * SCALE]);
const mirrored = (pts, zero) => pts.map(([x, y]) => [x, 2 * zero - y]);

const sok1 = scaled([
    [11,188],[20,157],[40,160],[60,170],[75,166],[90,163],[110,165],[135,157],[160,151],[185,150],[210,153],[250,152],[290,152],
    [345,155],[360,150],[385,150],[415,146],[450,148],[480,150],[500,155],[520,157],[540,158],[560,160],[580,158],[600,155],[612,162],
    [625,170],[640,173],[660,165],[675,168],[690,170],[720,172],[745,170],[760,165],[775,163],[795,168],[810,170],[830,165],[845,167],[860,170],
    [880,167],[900,165],[920,168],[940,170],[965,168],[985,162],[1010,164],[1040,168],[1060,171],[1080,172],[1100,170],[1120,168],[1135,170],[1150,165],[1170,170],[1182,178],
    [1190,188],[1203,195]
]);
polyline(sok1, '#0000e0');
polyline(mirrored(sok1, 249.5), '#ff0000');

const sok2 = [
    [13,391],[30,347],[43,349],[62,354],[78,358],[93,355],[110,348],[125,344],[140,344],[157,346],[173,348],[188,343],[205,343],[220,343],[237,342],[253,343],[268,345],[283,345],[302,348],[318,357],[333,355],[347,353],[360,352],[380,354],[400,354],[412,352],[430,353],[445,349],[460,352],[477,350],[493,355]
].concat(scaled([
    [410,285],[445,286],[480,286],[500,288],[520,288],[540,290],[560,290],[585,293],[605,288],[620,300],[635,306],[655,303],[680,306],[700,305],[720,304],[745,305],
    [760,307],[775,310],[800,304],[820,313],[830,308],[845,308],[875,310],[910,307],[940,311],[975,309],[1000,307],[1020,308],[1040,310],[1075,312],[1110,310],[1140,310],
    [1170,308],[1182,312],[1190,328],[1203,334]
]));
polyline(sok2, '#00ffff');
polyline(mirrored(sok2, 416), '#ff0000');

const sok3 = scaled([
    [11,463],[21,421],[40,424],[75,426],[90,418],[100,414],[130,413],[160,415],[200,420],[235,421],[258,431],[300,429],[345,431],[360,428],
    [400,431],[450,430],[500,434],[530,432],[560,433],[600,429],[620,440],[635,446],[660,442],[690,445],[720,445],[745,449],[775,447],[810,449],[830,450],
    [860,454],[900,454],[940,455],[975,453],[1010,455],[1040,455],[1100,456],[1140,454],[1170,449],[1180,452],[1190,464],[1203,468]
]);
polyline(sok3, '#00ffff');
polyline(mirrored(sok3, 465.5 * SCALE), '#0000e0');

// equity curve, one value per bar from bar 30, in thirds of a pixel from y=650
const equity = [
    445,445,445,457,457,465,475,460,437,425,431,436,415,423,415,462,467,340,284,325,304,336,313,316,343,340,327,265,260,256,208,238,
    281,226,229,244,208,211,216,229,211,216,216,216,214,235,232,232,247,229,238,208,205,205,205,196,190,193,225,232,229,60,28
];
polyline(equity.map((v, i) => [13.5 + 16 * (i + 30), 650 + v / 3]), '#4682b4');
hline(791, 493, 1485, '#ff4500', '', 2);
```
